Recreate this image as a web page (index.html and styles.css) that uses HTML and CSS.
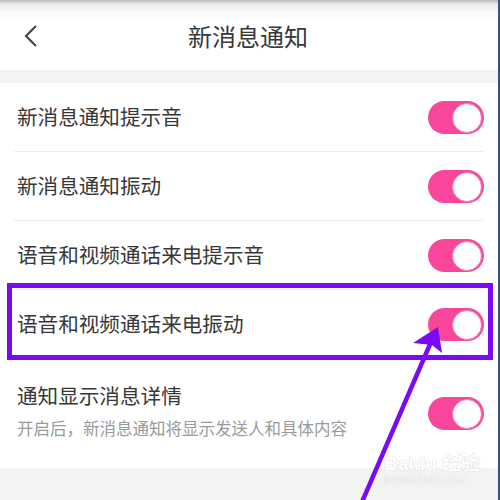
FILE: index.html
```html
<!DOCTYPE html>
<html>
<head>
  <meta charset="utf-8">
  <title>新消息通知</title>
  <link rel="stylesheet" href="styles.css">
</head>
<body>

  <div class="screen">
    <div class="topbar">
      <svg class="back" width="16" height="24" viewBox="0 0 16 24">
        <polyline points="13,2 3,12 13,22" fill="none" stroke="#444" stroke-width="2.2" />
      </svg>
      <div class="title">新消息通知</div>
      <div></div>
    </div>

    <div class="gap"></div>

    <div class="list">
      <div class="row">
        <span class="label">新消息通知提示音</span>
        <span class="switch"></span>
      </div>
      <div class="row">
        <span class="label">新消息通知振动</span>
        <span class="switch"></span>
      </div>
      <div class="row">
        <span class="label">语音和视频通话来电提示音</span>
        <span class="switch"></span>
      </div>
      <div class="row">
        <span class="label">语音和视频通话来电振动</span>
        <span class="switch"></span>
      </div>
      <div class="row tall">
        <div>
          <div class="label">通知显示消息详情</div>
          <div class="sub">开启后，新消息通知将显示发送人和具体内容</div>
        </div>
        <span class="switch"></span>
      </div>
    </div>

    <div class="mark">
      <div class="mark-big">Bai<span class="paw">du</span> 经验</div>
      <div class="mark-small">jingyan.baidu.com</div>
    </div>

    <!-- annotation -->
    <div class="highlight"></div>
    <svg class="arrow" width="500" height="500" viewBox="0 0 500 500">
      <line x1="362" y1="502" x2="431" y2="342" stroke="#7a0af2" stroke-width="4.5" />
      <polygon points="438,327 442,353 432,345 413,343" fill="#7a0af2" />
    </svg>
  </div>

</body>
</html>
```

FILE: styles.css
```css
body {
  margin: 0;
  font-family: "Noto Sans CJK SC", "Noto Sans", sans-serif;
  background: #fff;
}

.screen {
  position: relative;
  width: 498px;
  height: 500px;
  overflow: hidden;
  background: #f3f3f3;
  border-right: 2px solid #2f5590;
}

.topbar {
  height: 70px;
  display: grid;
  grid-template-columns: 60px 1fr 60px;
  align-items: center;
  background: linear-gradient(#b9b9b9 0, #e9e9e9 4px, #fafafa 12px, #fff 20px);
}

.back {
  margin-left: 23px;
  margin-top: 2px;
}

.title {
  text-align: center;
  font-size: 24px;
  color: #383838;
  padding-top: 0;
  padding-right: 2px;
}

.gap {
  height: 13px;
  background: #f3f3f3;
}

.list {
  background: #fff;
}

.row {
  position: relative;
  height: 68px;
  display: flex;
  align-items: center;
  justify-content: space-between;
  padding: 0 14px 0 17px;
  border-bottom: 1px solid transparent;
}

.row::after {
  content: "";
  position: absolute;
  left: 14px;
  right: 14px;
  bottom: -1px;
  height: 1px;
  background: #eeeeee;
}

.row.tall {
  height: 108px;
}

.row.tall::after {
  display: none;
}

.label {
  font-size: 20.6px;
  color: #383838;
  margin-top: -2px;
}

.tall .label {
  margin-top: -6px;
}

.sub {
  font-size: 16.5px;
  color: #9a9a9a;
  margin-top: 6px;
}

.switch {
  position: relative;
  width: 56px;
  height: 33px;
  border-radius: 17px;
  background: #f8469b;
  flex-shrink: 0;
}

.switch::after {
  content: "";
  position: absolute;
  right: 2px;
  top: 2px;
  width: 28px;
  height: 28px;
  border-radius: 50%;
  background: #fff;
  border: 0.5px solid #f27ab3;
}

.mark {
  position: absolute;
  left: 384px;
  top: 448px;
  color: #ffffff;
  text-shadow: 0 0 1px #cfcfcf, 0 0 1px #cfcfcf;
  font-family: "Liberation Sans", "Noto Sans CJK SC", sans-serif;
}

.mark-big {
  font-size: 19px;
  font-weight: bold;
}

.mark-small {
  font-size: 10px;
  margin-top: -1px;
}

.highlight {
  position: absolute;
  left: 7px;
  top: 283px;
  width: 476px;
  height: 67px;
  border: 5px solid #7a0af2;
}

.arrow {
  position: absolute;
  left: 0;
  top: 0;
}
```
